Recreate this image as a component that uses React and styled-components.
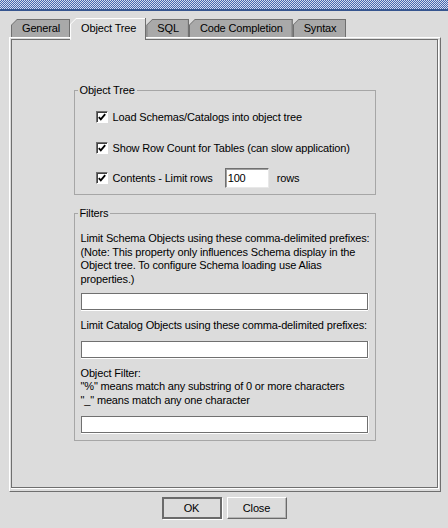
import React from 'react';
import styled, { createGlobalStyle } from 'styled-components';

const Global = createGlobalStyle`
  html, body { margin: 0; padding: 0; background: #dcdcdc; }
  body {
    font-family: "Liberation Sans", Arial, sans-serif;
    font-size: 11px;
    letter-spacing: -0.15px;
    color: #000;
  }
  * { box-sizing: border-box; }
`;

const Window = styled.div`
  width: 448px;
  height: 528px;
  display: flex;
  flex-direction: column;
  background: #dcdcdc;
  overflow: hidden;
`;

const TitleStrip = styled.div`
  height: 11px;
  flex: none;
  background: repeating-conic-gradient(#4567b0 0 25%, #d4dcee 0 50%) 0 0 / 2px 2px;
  border-bottom: 2px solid #36558f;
`;

const TabStrip = styled.div`
  display: flex;
  align-items: flex-end;
  height: 19px;
  margin: 7px 0 0 11px;
  position: relative;
  z-index: 2;
`;

const TabOuter = styled.div`
  height: ${(p) => (p.$active ? '22px' : '18px')};
  margin-bottom: ${(p) => (p.$active ? '-3px' : '0')};
  background: ${(p) => (p.$active ? '#ffffff' : '#6f6f6f')};
  border-right: 1px solid #6f6f6f;
  padding: 1px 0 0 1px;
  clip-path: polygon(6px 0, 100% 0, 100% 100%, 0 100%, 0 6px);
  display: flex;
`;

const TabInner = styled.div`
  flex: 1;
  background: ${(p) => (p.$active ? '#dcdcdc' : '#a9a9a9')};
  clip-path: polygon(5px 0, 100% 0, 100% 100%, 0 100%, 0 5px);
  padding: ${(p) => (p.$active ? '2px' : '1px')} 9px 0 10px;
  line-height: 14px;
  white-space: nowrap;
`;

const Panel = styled.div`
  height: 455px;
  margin: 0 7px 0 9px;
  border: 1px solid;
  border-color: #ffffff #6f6f6f #6f6f6f #ffffff;
  padding: 1px 2px 3px 1px;
  display: flex;
`;

const PanelInner = styled.div`
  flex: 1;
  border: 1px solid #6f6f6f;
  box-shadow: 1px 1px 0 #ffffff, 0 1px 0 #ffffff;
  padding-top: 44px;
  display: flex;
  flex-direction: column;
  align-items: center;
`;

const Group = styled.fieldset`
  width: 302px;
  margin: ${(p) => p.$mt || 0}px 0 0 0;
  padding: 0;
  border: 1px solid #a6a6a6;
  min-width: 0;
`;

const Legend = styled.legend`
  margin-left: 3px;
  padding: 0 2px;
  line-height: 13px;
  font-size: 11px;
`;

const GroupBody = styled.div`
  padding: ${(p) => p.$pad};
`;

const Rows = styled.div`
  display: flex;
  flex-direction: column;
  gap: 10.5px;
`;

const Row = styled.div`
  display: flex;
  align-items: center;
  height: 20px;
  white-space: nowrap;
`;

const Box = styled.span`
  width: 12px;
  height: 12px;
  flex: none;
  border: 1px solid;
  border-color: #707070 #ffffff #ffffff #707070;
  background: #fff;
  box-shadow: inset 1px 1px 0 #404040;
  margin-right: 5px;
  display: flex;
  align-items: center;
  justify-content: center;
`;

const SmallField = styled.div`
  width: 44px;
  height: 20px;
  margin: 0 8px 0 12px;
  background: #fff;
  border: 1px solid;
  border-color: #707070 #e8e8e8 #e8e8e8 #707070;
  box-shadow: inset 1px 1px 0 #a0a0a0;
  padding: 0 0 0 2px;
  line-height: 18px;
`;

const Text = styled.div`
  line-height: 13.5px;
  white-space: nowrap;
  margin-top: ${(p) => p.$mt || 0}px;
`;

const Field = styled.div`
  height: 17px;
  margin-top: ${(p) => p.$mt || 0}px;
  background: #fff;
  border: 1px solid #707070;
  box-shadow: 0 1px 0 #ffffff, 1px 0 0 #ffffff;
`;

const Buttons = styled.div`
  display: flex;
  justify-content: center;
  gap: 5px;
  margin-top: 5px;
`;

const Button = styled.div`
  width: 60px;
  height: 22px;
  display: flex;
  align-items: center;
  justify-content: center;
  background: #dcdcdc;
  border: ${(p) => (p.$default ? '2px solid #6a6a6a' : '1px solid')};
  border-color: ${(p) => (p.$default ? '#6a6a6a' : '#ffffff #6a6a6a #6a6a6a #ffffff')};
  box-shadow: ${(p) => (p.$default ? '1px 1px 0 #ffffff' : 'inset -1px -1px 0 #b4b4b4')};
  font-size: 11px;
`;

const Check = () => (
  <svg width="8" height="8" viewBox="0 0 8 8">
    <polyline points="0.8,4.2 2.8,6.4 7.2,1.2" fill="none" stroke="#000" strokeWidth="1.8" />
  </svg>
);

const CheckRow = ({ children }) => (
  <Row>
    <Box>
      <Check />
    </Box>
    {children}
  </Row>
);

const tabs = ['General', 'Object Tree', 'SQL', 'Code Completion', 'Syntax'];

export default function App() {
  return (
    <Window>
      <Global />
      <TitleStrip />
      <TabStrip>
        {tabs.map((t) => (
          <TabOuter key={t} $active={t === 'Object Tree'}>
            <TabInner $active={t === 'Object Tree'}>{t}</TabInner>
          </TabOuter>
        ))}
      </TabStrip>
      <Panel>
        <PanelInner>
          <Group>
            <Legend>Object Tree</Legend>
            <GroupBody $pad="10px 0 6px 21px">
              <Rows>
                <CheckRow>Load Schemas/Catalogs into object tree</CheckRow>
                <CheckRow>Show Row Count for Tables (can slow application)</CheckRow>
                <CheckRow>
                  Contents - Limit rows
                  <SmallField>100</SmallField>
                  rows
                </CheckRow>
              </Rows>
            </GroupBody>
          </Group>
          <Group $mt={12}>
            <Legend>Filters</Legend>
            <GroupBody $pad="12px 7px 7px 6px">
              <Text>
                Limit Schema Objects using these comma-delimited prefixes:
                <br />
                (Note: This property only influences Schema display in the
                <br />
                Object tree. To configure Schema loading use Alias
                <br />
                properties.)
              </Text>
              <Field $mt={7} />
              <Text $mt={9}>Limit Catalog Objects using these comma-delimited prefixes:</Text>
              <Field $mt={8} />
              <Text $mt={9}>
                Object Filter:
                <br />
                "%" means match any substring of 0 or more characters
                <br />
                "_" means match any one character
              </Text>
              <Field $mt={9} />
            </GroupBody>
          </Group>
        </PanelInner>
      </Panel>
      <Buttons>
        <Button $default>OK</Button>
        <Button>Close</Button>
      </Buttons>
    </Window>
  );
}
